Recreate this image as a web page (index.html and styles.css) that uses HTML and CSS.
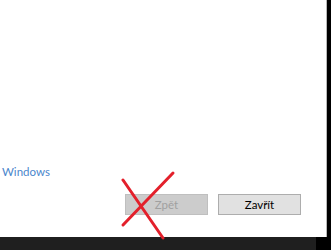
FILE: index.html
```html
<!DOCTYPE html>
<html lang="cs">
<head>
<meta charset="utf-8">
<link rel="stylesheet" href="styles.css">
</head>
<body>
<div class="screen">
  <div class="window">
    <div class="content"></div>
    <a class="link" href="#">Windows</a>
    <div class="buttons">
      <button class="btn btn-disabled" disabled>Zpět</button>
      <button class="btn">Zavřít</button>
    </div>
  </div>
  <div class="taskbar"></div>
  <svg class="cross" width="65" height="70" viewBox="0 0 65 70">
    <line x1="8" y1="10" x2="48" y2="68" />
    <line x1="58" y1="3" x2="8" y2="55" />
  </svg>
</div>
</body>
</html>
```
FILE: styles.css
```css
html, body {
  margin: 0;
  padding: 0;
  background: #000;
  width: 331px;
  height: 250px;
  overflow: hidden;
  font-family: "Lato", "Noto Sans", sans-serif;
}
.screen {
  position: relative;
  width: 331px;
  height: 250px;
}
.window {
  width: 326px;
  height: 237px;
  background: #fff;
  border-right: 1px solid #b8b8b8;
  display: flex;
  flex-direction: column;
}
.content {
  flex: 1;
}
.link {
  display: block;
  margin-left: 2px;
  font-size: 11.5px;
  line-height: 16px;
  color: #4a86cc;
  text-decoration: none;
}
.buttons {
  display: flex;
  justify-content: flex-end;
  gap: 10px;
  margin-top: 14px;
  margin-bottom: 22px;
  padding-right: 25px;
}
.btn {
  width: 83px;
  height: 21px;
  box-sizing: border-box;
  background: #e1e1e1;
  border: 1px solid #adadad;
  font-family: "Lato", "Noto Sans", sans-serif;
  font-size: 11.5px;
  color: #000;
  padding: 0;
  line-height: 19px;
}
.btn-disabled {
  background: #cccccc;
  border-color: #bfbfbf;
  color: #a0a0a0;
}
.taskbar {
  width: 316px;
  height: 13px;
  background: #1f1f1f;
}
.cross {
  position: absolute;
  left: 115px;
  top: 170px;
}
.cross line {
  stroke: #e3202b;
  stroke-width: 3;
  stroke-linecap: round;
}
```
